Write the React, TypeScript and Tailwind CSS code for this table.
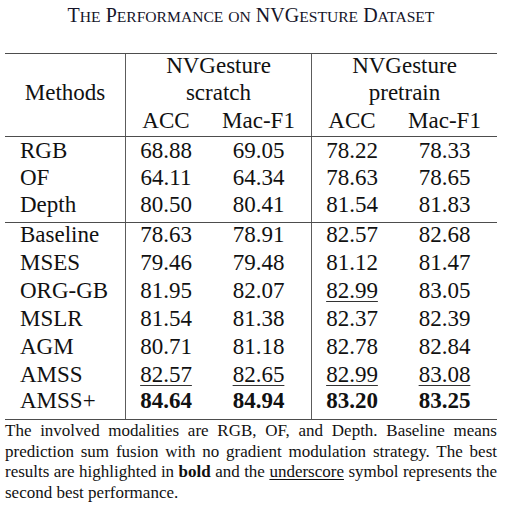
import React from "react";

interface ResultRow {
  name: string;
  values: string[];
  underlined?: number[];
  bold?: boolean;
  height: string;
}

const RESULT_ROWS: ResultRow[] = [
  { name: "RGB", values: ["68.88", "69.05", "78.22", "78.33"], height: "h-[29px] pt-[2px]" },
  { name: "OF", values: ["64.11", "64.34", "78.63", "78.65"], height: "h-[27.3px]" },
  { name: "Depth", values: ["80.50", "80.41", "81.54", "81.83"], height: "h-[28.7px]" },
  { name: "Baseline", values: ["78.63", "78.91", "82.57", "82.68"], height: "h-[28px]" },
  { name: "MSES", values: ["79.46", "79.48", "81.12", "81.47"], height: "h-[28px]" },
  { name: "ORG-GB", values: ["81.95", "82.07", "82.99", "83.05"], underlined: [2], height: "h-[28px]" },
  { name: "MSLR", values: ["81.54", "81.38", "82.37", "82.39"], height: "h-[28px]" },
  { name: "AGM", values: ["80.71", "81.18", "82.78", "82.84"], height: "h-[28px]" },
  { name: "AMSS", values: ["82.57", "82.65", "82.99", "83.08"], underlined: [0, 1, 2, 3], height: "h-[26px]" },
  { name: "AMSS+", values: ["84.64", "84.94", "83.20", "83.25"], bold: true, height: "h-[30px]" },
];

// title words: leading capital + small-caps remainder
const TITLE: [string, string][] = [
  ["T", "he"],
  ["P", "erformance"],
  ["", "on"],
  ["NVG", "esture"],
  ["D", "ataset"],
];

const line = "border-l border-[#5c5c5c]";

const Rule = () => <div className="col-span-5 h-px bg-[#4d4d4d]" />;

const BodyRow = ({ row }: { row: ResultRow }) => {
  const cell = `${row.height} leading-[23.4px]`;
  return (
    <>
      <div className={`${cell} pl-[15px]`}>{row.name}</div>
      {row.values.map((v, i) => (
        <div
          key={i}
          className={`${cell} text-center ${i % 2 === 0 ? line : ""} ${row.bold ? "font-bold" : ""}`}
        >
          <span
            className={
              row.underlined?.includes(i)
                ? "underline decoration-1 underline-offset-[3px] decoration-[#333]"
                : ""
            }
          >
            {v}
          </span>
        </div>
      ))}
    </>
  );
};

export default function App() {
  const head = "h-[27.33px] leading-[23.4px]";

  return (
    <div className="w-[522px] h-[507px] bg-white text-[#111] font-[family-name:Liberation_Serif,Times_New_Roman,serif] overflow-hidden">
      <div className="ml-[5px] w-[492px]">
        {/* Title */}
        <div className="h-[53px] pt-[3px] text-center text-[20px] leading-[24px] text-[#15152a]">
          {TITLE.map(([cap, rest], i) => (
            <React.Fragment key={i}>
              {i > 0 && " "}
              {cap}
              <span className="text-[15.6px] uppercase">{rest}</span>
            </React.Fragment>
          ))}
        </div>

        <div className="grid grid-cols-[120px_81px_105px_81px_105px] text-[23px]">
          <Rule />

          {/* Header */}
          <div className={head} />
          <div className={`${head} col-span-2 text-center ${line}`}>NVGesture</div>
          <div className={`${head} col-span-2 text-center ${line}`}>NVGesture</div>

          <div className={`${head} text-center`}>Methods</div>
          <div className={`${head} col-span-2 text-center ${line}`}>scratch</div>
          <div className={`${head} col-span-2 text-center ${line}`}>pretrain</div>

          <div className={head} />
          <div className={`${head} text-center ${line}`}>ACC</div>
          <div className={`${head} text-center`}>Mac-F1</div>
          <div className={`${head} text-center ${line}`}>ACC</div>
          <div className={`${head} text-center`}>Mac-F1</div>

          <Rule />
          {RESULT_ROWS.slice(0, 3).map((r) => (
            <BodyRow key={r.name} row={r} />
          ))}
          <Rule />
          {RESULT_ROWS.slice(3).map((r) => (
            <BodyRow key={r.name} row={r} />
          ))}
          <Rule />
        </div>

        {/* Caption */}
        <p className="pt-px text-[17px] leading-[20.6px] text-justify text-[#111]">
          The involved modalities are RGB, OF, and Depth. Baseline means prediction sum fusion
          with no gradient modulation strategy. The best results are highlighted in{" "}
          <span className="font-bold">bold</span> and the{" "}
          <span className="underline decoration-1 underline-offset-2">underscore</span> symbol
          represents the second best performance.
        </p>
      </div>
    </div>
  );
}
